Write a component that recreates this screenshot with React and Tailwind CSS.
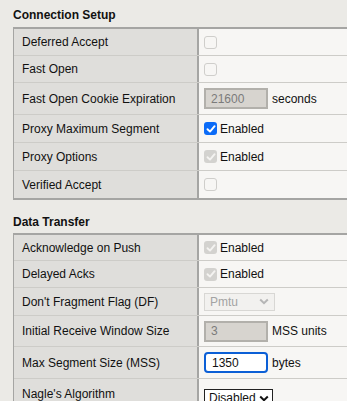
import React from "react";

const Check = ({ checked, disabled }) => {
  if (checked && !disabled) {
    return (
      <span className="inline-flex w-[13px] h-[13px] rounded-[3px] bg-[#0b6bf7] items-center justify-center shrink-0">
        <svg width="10" height="10" viewBox="0 0 10 10"><path d="M1.5 5.2 L4 7.6 L8.6 2.2" fill="none" stroke="#fff" strokeWidth="1.9" strokeLinecap="round" strokeLinejoin="round" /></svg>
      </span>
    );
  }
  if (checked && disabled) {
    return (
      <span className="inline-flex w-[13px] h-[13px] rounded-[3px] bg-[#d3d2cf] items-center justify-center shrink-0">
        <svg width="10" height="10" viewBox="0 0 10 10"><path d="M1.5 5.2 L4 7.6 L8.6 2.2" fill="none" stroke="#f4f3f1" strokeWidth="1.9" strokeLinecap="round" strokeLinejoin="round" /></svg>
      </span>
    );
  }
  return <span className="inline-block w-[13px] h-[13px] rounded-[3px] border border-[#cfcecb] bg-[#f7f6f4] shrink-0" />;
};

const Chevron = ({ color }) => (
  <svg width="10" height="7" viewBox="0 0 10 7"><path d="M1.2 1.5 L5 5.2 L8.8 1.5" fill="none" stroke={color} strokeWidth="2" /></svg>
);

const Row = ({ label, h, children, last }) => (
  <div className={`flex ${h} ${last ? "" : "border-b border-[#cdccc8]"}`}>
    <div className="w-[185px] shrink-0 bg-[#dfdedb] border-r-2 border-[#a5a5a3] flex items-center pl-[8px] text-[12px] text-[#111]">{label}</div>
    <div className="flex-1 bg-[#f7f6f4] flex items-center pl-[5px] gap-[4px] text-[12px] text-[#111]">{children}</div>
  </div>
);

const Enabled = ({ disabled }) => (
  <>
    <Check checked disabled={disabled} />
    <span className="ml-[-1px]">Enabled</span>
  </>
);

const DisabledInput = ({ value }) => (
  <span className="inline-flex items-center w-[64px] h-[21px] bg-[#d7d4cf] border-2 border-[#b2b0ab] pl-[5px] text-[#7b7b7b] text-[12px]">{value}</span>
);

export default function App() {
  return (
    <div className="w-[347px] h-[401px] overflow-hidden bg-[#ebeae6]" style={{ fontFamily: '"Liberation Sans", Arial, sans-serif' }}>
      <div className="pt-[8px] pl-[13px] font-bold text-[12px] text-[#111] h-[27px] leading-[15px]">Connection Setup</div>
      <div className="ml-[13px] border-t-2 border-l border-b-2 border-[#a5a5a3] w-[360px]">
        <Row label="Deferred Accept" h="h-[27px]"><Check /></Row>
        <Row label="Fast Open" h="h-[27px]"><Check /></Row>
        <Row label="Fast Open Cookie Expiration" h="h-[32px]"><DisabledInput value="21600" /><span>seconds</span></Row>
        <Row label="Proxy Maximum Segment" h="h-[28px]"><Enabled /></Row>
        <Row label="Proxy Options" h="h-[28px]"><Enabled disabled /></Row>
        <Row label="Verified Accept" h="h-[27px]" last><Check /></Row>
      </div>
      <div className="pt-[15px] pl-[13px] font-bold text-[12px] text-[#111] h-[33px] leading-[15px]">Data Transfer</div>
      <div className="ml-[13px] border-t-2 border-l border-[#a5a5a3] w-[360px]">
        <Row label="Acknowledge on Push" h="h-[26px]"><Enabled disabled /></Row>
        <Row label="Delayed Acks" h="h-[27px]"><Enabled disabled /></Row>
        <Row label="Don't Fragment Flag (DF)" h="h-[28px]">
          <span className="inline-flex items-center justify-between w-[71px] h-[18px] border border-[#d8d7d4] bg-[#f2f1ef] px-[5px] text-[#a3a3a3]">
            <span>Pmtu</span><Chevron color="#b5b5b5" />
          </span>
        </Row>
        <Row label="Initial Receive Window Size" h="h-[31px]"><DisabledInput value="3" /><span>MSS units</span></Row>
        <Row label="Max Segment Size (MSS)" h="h-[32px]">
          <span className="inline-flex items-center w-[64px] h-[21px] bg-white border-2 border-[#0b5fd6] rounded-[4px] pl-[6px] text-[#111] text-[12px]">1350</span>
          <span>bytes</span>
        </Row>
        <Row label="Nagle's Algorithm" h="h-[30px]" last>
          <span className="inline-flex items-center gap-[3px] h-[18px] border border-[#222] bg-white pl-[4px] pr-[3px] text-[#111] mt-[8px]">
            <span>Disabled</span><Chevron color="#111" />
          </span>
        </Row>
      </div>
    </div>
  );
}
